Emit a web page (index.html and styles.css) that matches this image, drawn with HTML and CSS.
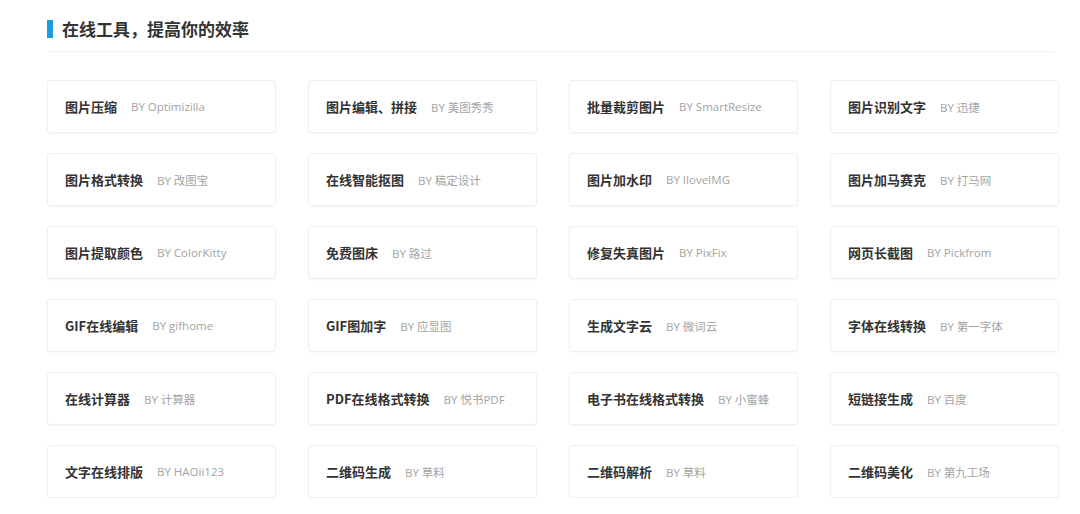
FILE: index.html
```html
<!DOCTYPE html>
<html lang="zh-CN">
<head>
<meta charset="utf-8">
<link rel="stylesheet" href="styles.css">
</head>
<body>
<div class="wrap">
  <div class="head">
    <span class="bar"></span>
    <h2 class="title">在线工具，提高你的效率</h2>
  </div>
  <div class="grid">
    <div class="card"><b>图片压缩</b><span>BY Optimizilla</span></div>
    <div class="card"><b>图片编辑、拼接</b><span>BY 美图秀秀</span></div>
    <div class="card"><b>批量裁剪图片</b><span>BY SmartResize</span></div>
    <div class="card"><b>图片识别文字</b><span>BY 迅捷</span></div>

    <div class="card"><b>图片格式转换</b><span>BY 改图宝</span></div>
    <div class="card"><b>在线智能抠图</b><span>BY 稿定设计</span></div>
    <div class="card"><b>图片加水印</b><span>BY IloveIMG</span></div>
    <div class="card"><b>图片加马赛克</b><span>BY 打马网</span></div>

    <div class="card"><b>图片提取颜色</b><span>BY ColorKitty</span></div>
    <div class="card"><b>免费图床</b><span>BY 路过</span></div>
    <div class="card"><b>修复失真图片</b><span>BY PixFix</span></div>
    <div class="card"><b>网页长截图</b><span>BY Pickfrom</span></div>

    <div class="card"><b>GIF在线编辑</b><span>BY gifhome</span></div>
    <div class="card"><b>GIF图加字</b><span>BY 应显图</span></div>
    <div class="card"><b>生成文字云</b><span>BY 微词云</span></div>
    <div class="card"><b>字体在线转换</b><span>BY 第一字体</span></div>

    <div class="card"><b>在线计算器</b><span>BY 计算器</span></div>
    <div class="card"><b>PDF在线格式转换</b><span>BY 悦书PDF</span></div>
    <div class="card"><b>电子书在线格式转换</b><span>BY 小蜜蜂</span></div>
    <div class="card"><b>短链接生成</b><span>BY 百度</span></div>

    <div class="card"><b>文字在线排版</b><span>BY HAOii123</span></div>
    <div class="card"><b>二维码生成</b><span>BY 草料</span></div>
    <div class="card"><b>二维码解析</b><span>BY 草料</span></div>
    <div class="card"><b>二维码美化</b><span>BY 第九工场</span></div>
  </div>
</div>
</body>
</html>
```
FILE: styles.css
```css
html, body {
  margin: 0;
  padding: 0;
  background: #fff;
}
body {
  font-family: "Noto Sans CJK SC", "Open Sans", sans-serif;
  color: #333;
}
.wrap {
  width: 1012px;
  margin-left: 47px;
  padding-top: 19px;
}
.head {
  display: flex;
  align-items: center;
  height: 20px;
  padding-bottom: 12px;
  border-bottom: 1px solid #f3f3f3;
  margin-right: 4px;
}
.bar {
  flex: none;
  width: 6px;
  height: 18px;
  background: #1a9de0;
  margin-right: 9px;
}
.title {
  margin: 0;
  font-size: 17px;
  font-weight: 700;
  color: #333;
  line-height: 20px;
}
.grid {
  margin-top: 28px;
  display: grid;
  grid-template-columns: repeat(4, 229px);
  column-gap: 32px;
  row-gap: 20px;
}
.card {
  box-sizing: border-box;
  height: 53px;
  border: 1px solid #efefef;
  border-radius: 3px;
  box-shadow: 0 1px 2px rgba(0,0,0,0.03);
  display: flex;
  align-items: center;
  padding-left: 17px;
}
.card b {
  font-size: 13px;
  font-weight: 700;
  color: #333;
}
.card span {
  font-family: "Open Sans", "Noto Sans CJK SC", sans-serif;
  font-size: 11.5px;
  color: #a3a3a3;
  margin-left: 14px;
}
```
